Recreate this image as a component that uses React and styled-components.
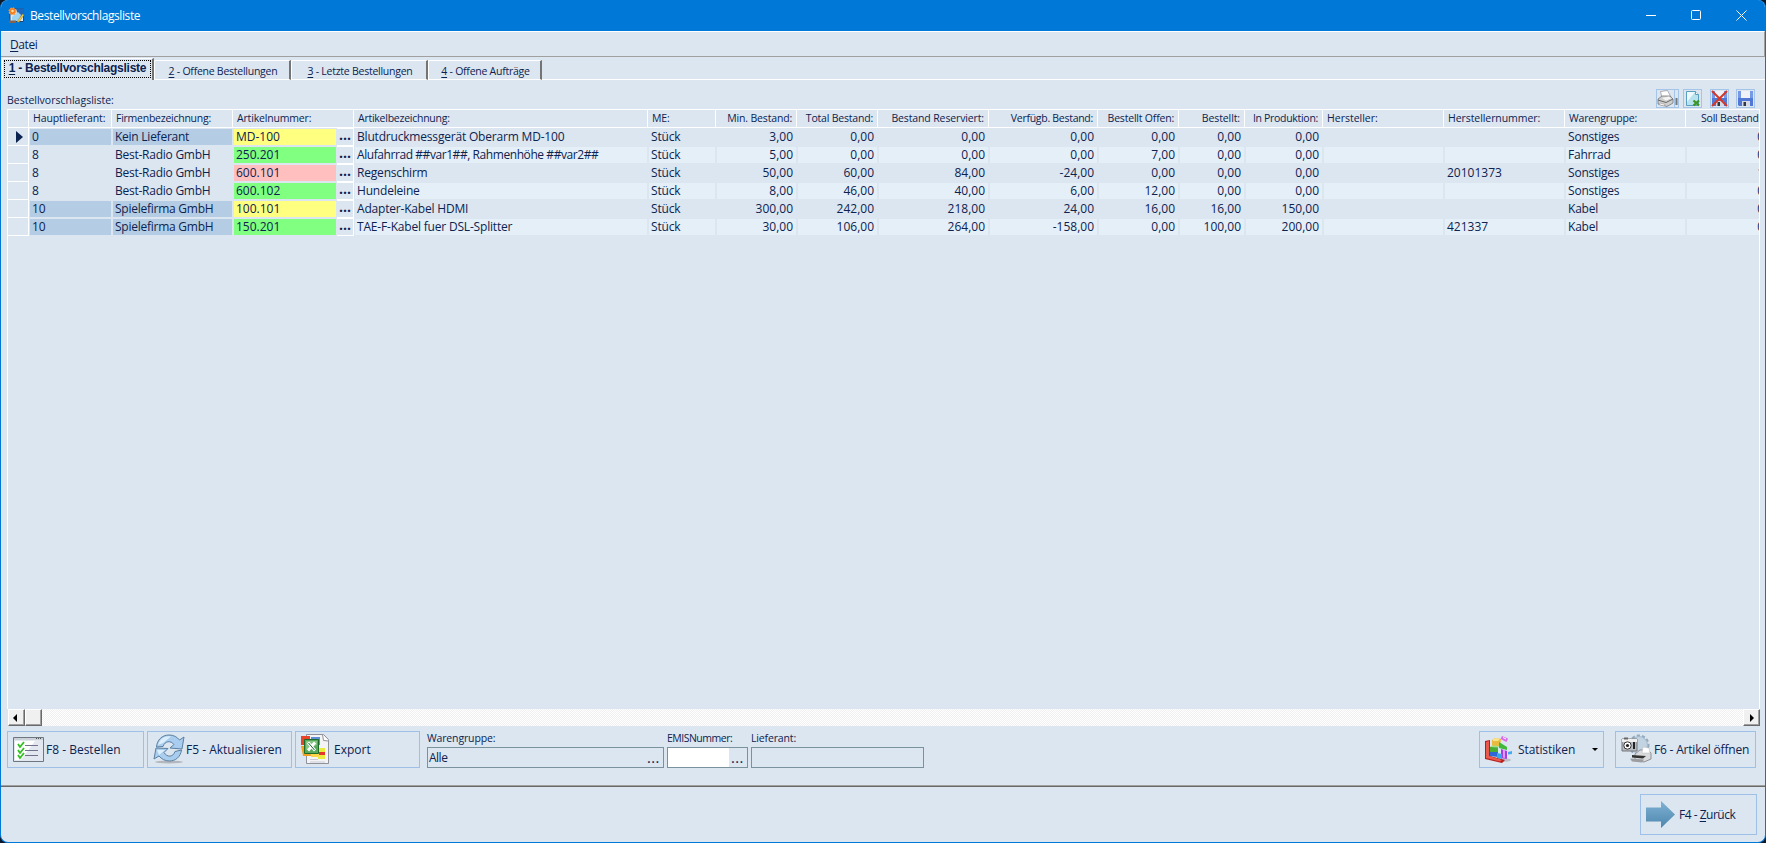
import React from "react";
import styled, { createGlobalStyle } from "styled-components";

const GlobalStyle = createGlobalStyle`
  * {
    box-sizing: border-box;
  }
  body {
    margin: 0;
    background: #0d1a2c;
    overflow: hidden;
  }
`;

const Window = styled.div`
  width: 1766px;
  height: 843px;
  display: flex;
  flex-direction: column;
  overflow: hidden;
  border: 1px solid #0078d7;
  border-top: 0;
  border-radius: 8px;
  background: #dce6f0;
  color: #0c2350;
  font-family: "Open Sans", "Noto Sans", sans-serif;
  font-size: 12px;
  white-space: nowrap;
  u {
    text-underline-offset: 2px;
  }
`;

const TitleBar = styled.header`
  flex: none;
  height: 31px;
  display: flex;
  align-items: center;
  padding: 0 18px 0 7px;
  background: #0078d7;
  color: #fff;
  h1 {
    flex: 1;
    margin: 0 0 0 5px;
    font-size: 12px;
    font-weight: 400;
    letter-spacing: -0.4px;
  }
`;

const WindowButtons = styled.div`
  display: flex;
  gap: 34px;
`;

const MenuBar = styled.nav`
  flex: none;
  height: 26px;
  display: flex;
  align-items: center;
  padding: 1px 0 0 9px;
  border-top: 1px solid #fff;
  border-bottom: 1px solid #a0a0a0;
  border-right: 1px solid #a0a0a0;
  letter-spacing: -0.4px;
`;

const Tabs = styled.div`
  flex: none;
  display: flex;
  height: 23px;
  padding: 1px 0 0 1px;
  &::after {
    content: "";
    flex: 1;
    border-bottom: 1px solid #fff;
  }
`;

const Tab = styled.button`
  width: ${(p) => p.$width}px;
  margin: ${(p) => (p.$active ? 0 : "2px 0 0")};
  padding: ${(p) => (p.$active ? "1px 1px 2px 1px" : "1px 0 0 2px")};
  border: 0;
  border-top: 1px solid #fff;
  border-left: 1px solid #fff;
  border-right: 2px solid #747474;
  border-bottom: ${(p) => (p.$active ? 0 : "1px solid #fff")};
  border-radius: 2px 0 0 0;
  background: #dce6f0;
  color: inherit;
  font-family: inherit;
  font-size: 10.5px;
  letter-spacing: -0.25px;
  span {
    display: block;
    height: 18px;
    border: 1px dotted #000;
    font: bold 12px/15px "Liberation Sans", sans-serif;
  }
`;

const Page = styled.main`
  flex: none;
  height: 705px;
  padding: 0 5px 0 6px;
  display: flex;
  flex-direction: column;
`;

const Caption = styled.div`
  flex: none;
  height: 29px;
  display: flex;
  justify-content: space-between;
  align-items: flex-end;
  font-size: 10.5px;
  padding-bottom: 1px;
  > span {
    padding-bottom: 1px;
  }
`;

const Tools = styled.div`
  display: flex;
  gap: 4px;
  padding-right: 5px;
`;

const Tool = styled.span`
  width: ${(p) => p.$width || 19}px;
  height: 19px;
  margin-left: ${(p) => p.$before || 0}px;
  border: 1px solid #a4c4e8;
  svg {
    display: block;
  }
`;

const Grid = styled.section`
  flex: none;
  width: 1753px;
  height: 600px;
  overflow: hidden;
  border: 1px solid #fff;
  border-bottom: 0;
`;

const Row = styled.div`
  display: grid;
  grid-template-columns: 21px 83px 121px 121px 294px 68px 81px 81px 111px 109px 81px 66px 78px 121px 121px 121px 99px;
  height: 18px;
`;

const HeadCell = styled.div`
  border-right: 1px solid #fff;
  border-bottom: 1px solid #fff;
  padding: 0 4px 0 ${(p) => p.$indent || 4}px;
  font-size: 10.5px;
  line-height: 17px;
  letter-spacing: ${(p) => p.$tracking || 0}px;
  text-align: ${(p) => (p.$right ? "right" : "left")};
`;

const Selector = styled.div`
  display: flex;
  align-items: center;
  padding-left: 8px;
  border-right: 1px solid #fff;
  border-bottom: 1px solid #fff;
`;

const Cell = styled.div`
  height: 16px;
  margin: 1px 1px 1px 1px;
  padding: 0 ${(p) => (p.$right ? 3 : 2)}px;
  line-height: 15px;
  letter-spacing: ${(p) => p.$tracking || 0}px;
  text-align: ${(p) => (p.$right ? "right" : "left")};
  background: ${(p) => p.$bg || "transparent"};
  overflow: hidden;
`;

const ArticleCell = styled.div`
  display: grid;
  grid-template-columns: 104px 16px;
  gap: 1px;
`;

const Lookup = styled.span`
  margin-left: -1px;
  border: 1px solid #fff;
  border-left: 0;
  font: bold 14px/12px "Open Sans", sans-serif;
  text-align: center;
`;

const ScrollBar = styled.div`
  flex: none;
  width: 1752px;
  height: 17px;
  margin-left: 1px;
  display: flex;
  background: repeating-conic-gradient(#fff 0 25%, #f0f0f0 0 50%) 0 0 / 2px 2px;
`;

const ScrollButton = styled.span`
  width: 17px;
  height: 17px;
  margin-left: ${(p) => (p.$end ? "auto" : 0)};
  padding-right: 3px;
  padding-right: ${(p) => (p.$end ? 0 : 3)}px;
  display: flex;
  align-items: center;
  justify-content: center;
  background: #f0f0f0;
  border: 1px solid #fff;
  border-right-color: #696969;
  border-bottom-color: #696969;
  box-shadow: inset -1px -1px #a0a0a0;
`;

const Actions = styled.div`
  display: flex;
  align-items: flex-start;
  padding-top: 5px;
  gap: 3px;
`;

const ActionButton = styled.button`
  width: ${(p) => p.$width}px;
  height: ${(p) => p.$height || 37}px;
  margin-left: ${(p) => p.$before || 0}px;
  padding: 0 0 1px ${(p) => p.$pad || 5}px;
  display: flex;
  align-items: center;
  gap: ${(p) => (p.$gap === undefined ? 2 : p.$gap)}px;
  border: 1px solid #9fc0e6;
  background: transparent;
  color: inherit;
  font: inherit;
  letter-spacing: ${(p) => p.$tracking || 0}px;
  svg {
    flex: none;
  }
`;

const Caret = styled.i`
  margin-left: auto;
  margin-right: 5px;
  border: 3px solid transparent;
  border-top-color: #000;
  border-bottom: 0;
`;

const Field = styled.label`
  width: ${(p) => p.$width}px;
  margin-left: ${(p) => p.$before || 0}px;
  font-size: 10.5px;
  line-height: 14px;
  letter-spacing: ${(p) => p.$tracking || -0.15}px;
`;

const Box = styled.span`
  display: flex;
  justify-content: space-between;
  height: 21px;
  margin-top: 2px;
  padding-left: 1px;
  border: 1px solid #7a919e;
  font-size: 12px;
  line-height: 20px;
  letter-spacing: -0.5px;
  background: linear-gradient(#fff, #fff) no-repeat 0 0 / ${(p) => p.$filled || 0}px 100%;
  b {
    margin-left: auto;
    padding-right: 3px;
    font-weight: 600;
    line-height: 21px;
    letter-spacing: 1px;
  }
`;

const Footer = styled.footer`
  flex: 1;
  display: flex;
  justify-content: flex-end;
  padding: 8px 8px 0 0;
  border-top: 1px solid #a0a0a0;
  box-shadow: inset 0 1px #696969;
`;

const AppIcon = () => (
  <svg width="17" height="17" viewBox="0 0 17 17">
    <path d="M2 2h13.500v12.500H2z" fill="#dbeaf6" stroke="#24486e" />
    <path d="M8 1.500h8v7l-5 3z" fill="#1b68bd" />
    <path d="M4 10l6-5 3 3-2 6H4z" fill="#9cd2f2" />
    <circle cx="4.5" cy="4.300" r="3.200" fill="#f47a20" stroke="#f59a3c" strokeWidth="1.600" strokeDasharray="1.500 1" />
    <circle cx="4.5" cy="4" r="1.300" fill="#ffe3a4" />
    <path d="M9 15l5.500-8 1.500 1-5 7z" fill="#f0cd4a" stroke="#a87816" strokeWidth=".5" />
    <path d="M1 13.500h7V16H1z" fill="#84624f" />
  </svg>
);

const PrinterIcon = () => (
  <svg width="21" height="17" viewBox="0 0 21 17">
    <path d="M5 8L3.500 1.500l7-1L14 7z" fill="#fff" stroke="#9a9aa4" strokeWidth=".8" />
    <path d="M1 9l4-3h8l3 3v4l-6 3.500-9-2.500z" fill="#cfcfcf" stroke="#777" strokeWidth=".8" />
    <path d="M5 8l7-1.500 2 2-5 2z" fill="#f4f4f4" />
    <path d="M1 10l8 2.500L16 9" stroke="#666" fill="none" />
    <path d="M3 13l5 1.500-1 1.500-5-1.500z" fill="#fff" stroke="#888" strokeWidth=".5" />
    <path d="M17.500 0v17" stroke="#a4c4e8" />
    <path d="M19.500 8v7" stroke="#777" strokeWidth="2" />
  </svg>
);

const SheetIcon = () => (
  <svg width="17" height="17" viewBox="0 0 17 17">
    <path d="M2.500 1.500h9l3 3v11h-12z" fill="#b9e2f1" stroke="#5a9fc0" />
    <path d="M3 2h8L3 12z" fill="#eef9fd" />
    <path d="M11.500 1.500v3h3" fill="#fff" stroke="#5a9fc0" />
    <path d="M9.500 10.500l5.500 5M15 10.500l-5.500 5" stroke="#3d9622" strokeWidth="2.300" />
  </svg>
);

const DiskIcon = ({ crossed }) => (
  <svg width="17" height="17" viewBox="0 0 17 17">
    <path d="M1 1h15v15H2l-1-1z" fill="#5078d4" />
    <path d="M1 1h15v7H1z" fill="#7798e4" />
    <path d="M4 1h9v7H4z" fill="#eef1f8" />
    <path d="M5 11h8v5H5z" fill="#d5d9e2" />
    <path d="M6.500 12h2.500v4H6.500z" fill="#303848" />
    {crossed && <path d="M1 1l15 15M16 1L1 16" stroke="#d3392b" strokeWidth="2" />}
  </svg>
);

const ChecklistIcon = () => (
  <svg width="31" height="27" viewBox="0 0 31 27">
    <path d="M.500 1.500h30v24H.5z" fill="#e3e8f0" stroke="#6e7680" />
    <path d="M2 5h20L8 24H2z" fill="#fff" />
    <path d="M1 2h29v2H1z" fill="#cbd1d9" />
    <path d="M23 2.500h1m1 0h1m1 0h1" stroke="#555" />
    <path d="M12 9.500h13M12 14.500h13M12 19.500h13" stroke="#72728c" />
    <path d="M5 8l2 3 4-5M5 14l2 3 4-5M5 19l2 3 4-5" fill="none" stroke="#32c022" strokeWidth="1.800" />
  </svg>
);

const RefreshIcon = () => (
  <svg width="32" height="30" viewBox="0 0 32 30">
    <ellipse cx="16" cy="28" rx="14" ry="1.500" fill="#b4b7bc" />
    <path d="M3.500 13C4 6 9 1 16 1c5 0 8 2 10.500 5L31 3l-2 12-12-1 4-3.500c-3-4-9-4-11 2z" fill="#a9cdef" stroke="#5b7f9f" />
    <path d="M28.500 16c-1 7-6 11-12 11-4.500 0-8-2-10.500-5L1 25l2-11 12 .500-4 4c3 5 9 5 11-1z" fill="#a9cdef" stroke="#5b7f9f" />
    <path d="M5 11c2-6 7-9.500 13-8.500L10 9z" fill="#dceefb" />
    <path d="M4 16l8 0-6 5z" fill="#dceefb" />
  </svg>
);

const ExcelIcon = () => (
  <svg width="30" height="32" viewBox="0 0 30 32">
    <path d="M6.500 1.500h17l5 5v24h-22z" fill="#f4f4f7" stroke="#8f9298" />
    <path d="M22.500 1.500l1 6 5 .5" fill="#fff" stroke="#8f9298" />
    <path d="M18 15h7v4h-7zM18 22h7v4h-7z" fill="#e8ec3e" />
    <path d="M18 19h7v3h-7z" fill="#e8352a" />
    <path d="M10 29h15M10 26.500h8" stroke="#c9ccd4" />
    <path d="M1 3h9v9H1z" fill="#e8442a" />
    <path d="M11 4h9v8h-9z" fill="#5b8ed6" />
    <path d="M1 13h9l1 10H3z" fill="#f4a11e" />
    <path d="M11 20h8v4h-8z" fill="#f8d648" />
    <path d="M4.500 6.500h14v14h-14z" fill="#58a85c" stroke="#1d6b2b" />
    <path d="M6 8h11v4L6 17z" fill="#86c584" />
    <path d="M8 9.500l7 8M15 9.500l-7 8" stroke="#fff" strokeWidth="2.800" />
    <path d="M8.500 10l6 7" stroke="#17692a" strokeWidth="1" />
  </svg>
);

const StatsIcon = () => (
  <svg width="28" height="28" viewBox="0 0 28 28">
    <ellipse cx="19" cy="25" rx="7" ry="1.800" fill="#b9c0c9" />
    <path d="M0 6l5-1v16l15 4-3 3-17-4z" fill="#b91c1c" />
    <path d="M1 7l3-1v15l13 4-2 1.500L1 23z" fill="#ea5a4c" />
    <path d="M7 5l3-2 6 1-1 7-8 1z" fill="#e9bb3e" />
    <path d="M8 4l3-1 4 1-2 2H8z" fill="#f8e28a" />
    <path d="M5 12l8-1v6l-8 1z" fill="#48ad32" />
    <path d="M5 12l2-1.500 7 .5-1 1.500z" fill="#a2e088" />
    <path d="M14 7l8 5v3l-8-2z" fill="#3fb83c" />
    <path d="M16 14l6 2v8l-6-1z" fill="#a33ee0" />
    <path d="M18 14.500l2 .5v8l-2-.5z" fill="#dc9cf5" />
    <path d="M5 17h8v5l-8-1z" fill="#2f67d6" />
    <path d="M12 18l5 1v5l-5-1z" fill="#35a9e8" />
    <path d="M17 1l6 2.500-1.500 3.500-6-3z" fill="#d96be8" />
    <path d="M18 2.500l3 1.500" stroke="#fff" />
    <path d="M23 17l4-1v3l-4 .500z" fill="#45aaf0" />
  </svg>
);

const ArticleIcon = () => (
  <svg width="31" height="30" viewBox="0 0 31 30">
    <circle cx="18" cy="11" r="9" fill="none" stroke="#93a9bd" strokeWidth="3" strokeDasharray="3 2" />
    <circle cx="18" cy="11" r="8.500" fill="#c2d3e2" stroke="#a6bace" />
    <path d="M1 5h15v12H1z" fill="#b9bcc0" stroke="#73777c" />
    <path d="M1 5h15v3H1z" fill="#efefef" />
    <path d="M3 3.500h4v2H3z" fill="#666" />
    <circle cx="6.500" cy="11.500" r="3.700" fill="#fff" stroke="#333" />
    <circle cx="6.500" cy="11.500" r="1.600" fill="#222" />
    <path d="M13 8v7" stroke="#222" strokeWidth="2" />
    <path d="M14 20l5-4h8l3 3v6l-7 3-9-2z" fill="#d9dadd" stroke="#8e9094" />
    <path d="M11 21l14 1-3 2.500-11-1z" fill="#333" />
    <path d="M9 24.500l14 1-2 3-10-1z" fill="#9b9da0" />
    <path d="M21 19l1-6 6 1 1 5z" fill="#fff" stroke="#bbb" strokeWidth=".5" />
  </svg>
);

const ArrowIcon = () => (
  <svg width="29" height="27" viewBox="0 0 29 27">
    <defs>
      <linearGradient id="arrow" x1="0" y1="0" x2="0" y2="1">
        <stop offset="0" stopColor="#7fb2d4" />
        <stop offset="1" stopColor="#4d86ad" />
      </linearGradient>
    </defs>
    <path d="M0 6.500h15V0l14 13.500L15 27v-6.500H0z" fill="url(#arrow)" />
  </svg>
);

// title and letter spacing
const columns = [
  ["Hauptlieferant:", -0.1],
  ["Firmenbezeichnung:", -0.25],
  ["Artikelnummer:", -0.17],
  ["Artikelbezeichnung:", -0.25],
  ["ME:", -0.1],
  ["Min. Bestand:", -0.17],
  ["Total Bestand:", -0.2],
  ["Bestand Reserviert:", -0.13],
  ["Verfügb. Bestand:", -0.28],
  ["Bestellt Offen:", -0.2],
  ["Bestellt:", -0.1],
  ["In Produktion:", -0.3],
  ["Hersteller:", 0],
  ["Herstellernummer:", -0.07],
  ["Warengruppe:", -0.17],
  ["Soll Bestand", -0.2],
];

const yellow = "#ffff80";
const green = "#80ff80";
const red = "#ffbfbf";

const rows = [
  ["0", "Kein Lieferant", "MD-100", yellow, "Blutdruckmessgerät Oberarm MD-100", "3,00", "0,00", "0,00", "0,00", "0,00", "0,00", "0,00", "", "Sonstiges", "0,00"],
  ["8", "Best-Radio GmbH", "250.201", green, "Alufahrrad ##var1##, Rahmenhöhe ##var2##", "5,00", "0,00", "0,00", "0,00", "7,00", "0,00", "0,00", "", "Fahrrad", "0,00"],
  ["8", "Best-Radio GmbH", "600.101", red, "Regenschirm", "50,00", "60,00", "84,00", "-24,00", "0,00", "0,00", "0,00", "20101373", "Sonstiges", "1,00"],
  ["8", "Best-Radio GmbH", "600.102", green, "Hundeleine", "8,00", "46,00", "40,00", "6,00", "12,00", "0,00", "0,00", "", "Sonstiges", "0,00"],
  ["10", "Spielefirma GmbH", "100.101", yellow, "Adapter-Kabel HDMI", "300,00", "242,00", "218,00", "24,00", "16,00", "16,00", "150,00", "", "Kabel", "0,00"],
  ["10", "Spielefirma GmbH", "150.201", green, "TAE-F-Kabel fuer DSL-Splitter", "30,00", "106,00", "264,00", "-158,00", "0,00", "100,00", "200,00", "421337", "Kabel", "0,00"],
];

function DataRow({ row, index }) {
  const [supplier, company, number, color, name, ...rest] = row;
  const amounts = rest.slice(0, 7);
  const [makerNumber, group, target] = rest.slice(7);
  const stripe = index % 2 ? "#e4eff8" : undefined;
  const supplierBg = supplier === "8" ? undefined : "#b4cde5";
  return (
    <Row>
      <Selector>
        {index === 0 && (
          <svg width="7" height="12" viewBox="0 0 7 12">
            <path d="M0 0l7 6-7 6z" fill="#0c2350" />
          </svg>
        )}
      </Selector>
      <Cell $bg={supplierBg}>{supplier}</Cell>
      <Cell $bg={supplierBg} $tracking={-0.25}>{company}</Cell>
      <ArticleCell>
        <Cell $bg={color}>{number}</Cell>
        <Lookup>...</Lookup>
      </ArticleCell>
      <Cell $bg={stripe} $tracking={name.includes("#") ? -0.43 : -0.19}>{name}</Cell>
      <Cell $bg={stripe} $tracking={-0.15}>Stück</Cell>
      {amounts.map((amount, i) => (
        <Cell key={i} $bg={stripe} $right>{amount}</Cell>
      ))}
      <Cell $bg={stripe} />
      <Cell $bg={stripe}>{makerNumber}</Cell>
      <Cell $bg={stripe} $tracking={-0.2}>{group}</Cell>
      <Cell $bg={stripe} $right>{target}</Cell>
    </Row>
  );
}

function App() {
  return (
    <>
      <GlobalStyle />
      <Window>
        <TitleBar>
          <AppIcon />
          <h1>Bestellvorschlagsliste</h1>
          <WindowButtons>
            <svg width="11" height="11" viewBox="0 0 11 11"><path d="M0 5.500h10" stroke="#fff" /></svg>
            <svg width="11" height="11" viewBox="0 0 11 11"><rect x=".5" y=".5" width="9" height="9" rx="1" fill="none" stroke="#fff" /></svg>
            <svg width="11" height="11" viewBox="0 0 11 11"><path d="M.5.5l10 10m0-10l-10 10" stroke="#fff" /></svg>
          </WindowButtons>
        </TitleBar>
        <MenuBar><span><u>D</u>atei</span></MenuBar>
        <Tabs>
          <Tab $active $width={152}><span><u>1</u> - Bestellvorschlagsliste</span></Tab>
          <Tab $width={137}><u>2</u> - Offene Bestellungen</Tab>
          <Tab $width={137}><u>3</u> - Letzte Bestellungen</Tab>
          <Tab $width={114}><u>4</u> - Offene Aufträge</Tab>
        </Tabs>
        <Page>
          <Caption>
            <span>Bestellvorschlagsliste:</span>
            <Tools>
              <Tool $width={23}><PrinterIcon /></Tool>
              <Tool><SheetIcon /></Tool>
              <Tool $before={4}><DiskIcon crossed /></Tool>
              <Tool $before={3}><DiskIcon /></Tool>
            </Tools>
          </Caption>
          <Grid>
            <Row>
              <HeadCell />
              {columns.map(([title, tracking], i) => (
                <HeadCell key={title} $tracking={tracking} $right={i > 4 && i < 12} $indent={i === 15 ? 15 : 4}>
                  {title}
                </HeadCell>
              ))}
            </Row>
            {rows.map((row, i) => (
              <DataRow key={i} row={row} index={i} />
            ))}
          </Grid>
          <ScrollBar>
            <ScrollButton><svg width="4" height="8"><path d="M4 0v8L0 4z" /></svg></ScrollButton>
            <ScrollButton />
            <ScrollButton $end><svg width="4" height="8"><path d="M0 0v8l4-4z" /></svg></ScrollButton>
          </ScrollBar>
          <Actions>
            <ActionButton $width={137}><ChecklistIcon />F8 - Bestellen</ActionButton>
            <ActionButton $width={145} $gap={1}><RefreshIcon />F5 - Aktualisieren</ActionButton>
            <ActionButton $width={125} $pad={4} $gap={4}><ExcelIcon />Export</ActionButton>
            <Field $width={237} $before={4}>Warengruppe:<Box>Alle<b>...</b></Box></Field>
            <Field $width={81} $tracking={-0.5}>EMISNummer:<Box $filled={61}><b>...</b></Box></Field>
            <Field $width={173}>Lieferant:<Box /></Field>
            <ActionButton $width={125} $before={552} $gap={5} $tracking={-0.1}><StatsIcon />Statistiken<Caret /></ActionButton>
            <ActionButton $width={141} $before={8} $tracking={-0.2}><ArticleIcon />F6 - Artikel öffnen</ActionButton>
          </Actions>
        </Page>
        <Footer>
          <ActionButton $width={117} $height={41} $gap={4} $tracking={-0.5}><ArrowIcon /><span>F4 - <u>Z</u>urück</span></ActionButton>
        </Footer>
      </Window>
    </>
  );
}

export default App;
